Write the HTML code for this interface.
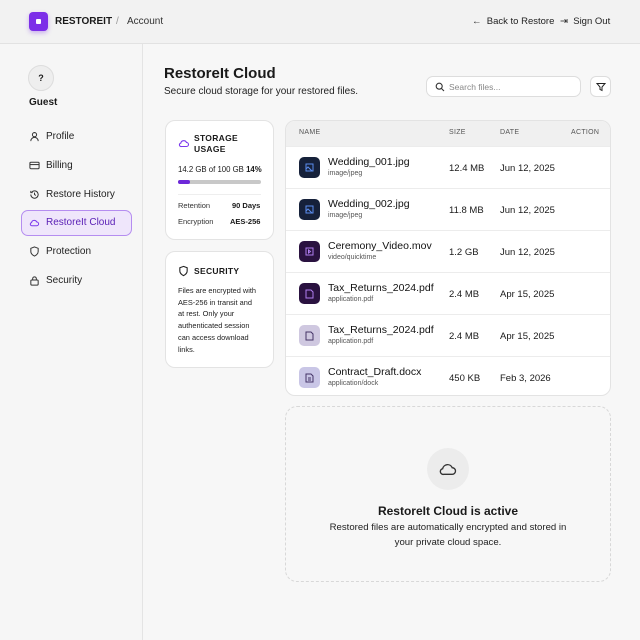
<!DOCTYPE html>
<html><head><meta charset="utf-8"><style>
*{box-sizing:border-box;margin:0;padding:0}
body{width:640px;height:640px;overflow:hidden;background:#f7f7f7;font-family:"Liberation Sans",sans-serif;color:#1a1a1a;position:relative}
.abs{position:absolute}
.top{left:0;top:0;width:640px;height:44px;background:#f2f2f2;border-bottom:1px solid #e2e2e2}
.side{left:0;top:44px;width:143px;height:596px;border-right:1px solid #e4e4e4;background:#f6f6f6}
.nav{position:absolute;left:29px;font-size:10px;color:#222;display:flex;align-items:center;gap:3px}
.nav svg{width:11px;height:11px}
.card{position:absolute;background:#fff;border:1px solid #e3e3e3;border-radius:10px}
.row{position:absolute;left:0;width:326px;height:42px;border-top:1px solid #ececec;font-size:9.5px}
.ic{position:absolute;left:13px;top:10px;width:21px;height:21px;border-radius:5px;display:flex;align-items:center;justify-content:center}
.fn{position:absolute;left:42px;top:9px;font-size:10.5px;color:#111}
.ft{position:absolute;left:42px;top:23px;font-size:7px;color:#555}
.sz{position:absolute;left:163px;top:16px}
.dt{position:absolute;left:214px;top:16px}
</style></head><body>
<div class="abs top"></div>
<div class="abs" style="left:29px;top:12px;width:19px;height:19px;background:#7c2ee8;border-radius:4px;box-shadow:0 2px 5px rgba(124,46,232,.35)"><div style="position:absolute;left:7px;top:7px;width:5px;height:5px;background:#fff;border-radius:1px"></div></div>
<div class="abs" style="left:55px;top:16px;font-size:10px;font-weight:bold">RESTOREIT</div>
<div class="abs" style="left:116px;top:16px;font-size:10px;color:#999">/</div>
<div class="abs" style="left:127px;top:16px;font-size:10px;color:#333">Account</div>
<div class="abs" style="left:472px;top:16px;font-size:9.5px;color:#222">← &nbsp;Back to Restore</div>
<div class="abs" style="left:560px;top:16px;font-size:9.5px;color:#222">⇥ &nbsp;Sign Out</div>

<div class="abs side"></div>
<div class="abs" style="left:28px;top:65px;width:26px;height:26px;border-radius:50%;background:#eee;border:1px solid #ddd;font-size:9px;font-weight:bold;text-align:center;line-height:24px">?</div>
<div class="abs" style="left:29px;top:97px;font-size:10px;font-weight:bold">Guest</div>
<div class="abs" style="left:21px;top:210px;width:111px;height:26px;border:1px solid #b58df0;background:#efe6fb;border-radius:7px"></div>
<div class="nav" style="top:131px"><svg viewBox="0 0 12 12" fill="none" stroke="#333" stroke-width="1.1"><circle cx="6" cy="4" r="2.3"/><path d="M2 11c0-2.5 2-4 4-4s4 1.5 4 4"/></svg><span style="margin-left:3px">Profile</span></div>
<div class="nav" style="top:160px"><svg viewBox="0 0 12 12" fill="none" stroke="#333" stroke-width="1.1"><rect x="1" y="2.5" width="10" height="7" rx="1"/><path d="M1 5h10"/></svg><span style="margin-left:3px">Billing</span></div>
<div class="nav" style="top:189px"><svg viewBox="0 0 12 12" fill="none" stroke="#333" stroke-width="1.1"><path d="M2 6a4 4 0 1 0 1.2-2.8M2 2v2h2M6 4v2l1.5 1"/></svg><span style="margin-left:3px">Restore History</span></div>
<div class="nav" style="top:217px;color:#5b21b6"><svg viewBox="0 0 12 12" fill="none" stroke="#7c3aed" stroke-width="1.1"><path d="M3.5 9.5h5a2 2 0 0 0 0-4 3 3 0 0 0-5.7.6A1.7 1.7 0 0 0 3.5 9.5z"/></svg><span style="margin-left:3px">RestoreIt Cloud</span></div>
<div class="nav" style="top:246px"><svg viewBox="0 0 12 12" fill="none" stroke="#333" stroke-width="1.1"><path d="M6 1l4 1.5v3.5c0 2.5-2 4-4 5-2-1-4-2.5-4-5V2.5z"/></svg><span style="margin-left:3px">Protection</span></div>
<div class="nav" style="top:275px"><svg viewBox="0 0 12 12" fill="none" stroke="#333" stroke-width="1.1"><rect x="2" y="5.5" width="8" height="5.5" rx="1"/><path d="M4 5.5V4a2 2 0 0 1 4 0v1.5"/></svg><span style="margin-left:3px">Security</span></div>

<div class="abs" style="left:164px;top:65px;font-size:15px;font-weight:bold">RestoreIt Cloud</div>
<div class="abs" style="left:164px;top:86px;font-size:10px;color:#222">Secure cloud storage for your restored files.</div>
<div class="abs" style="left:426px;top:76px;width:155px;height:21px;background:#fff;border:1px solid #ddd;border-radius:7px"><svg class="abs" style="left:8px;top:5px" width="10" height="10" viewBox="0 0 10 10" fill="none" stroke="#333" stroke-width="1.1"><circle cx="4.2" cy="4.2" r="3"/><path d="M6.5 6.5L9 9"/></svg><span class="abs" style="left:22px;top:5px;font-size:8.5px;color:#888">Search files...</span></div>
<div class="abs" style="left:590px;top:76px;width:21px;height:21px;background:#fff;border:1px solid #ddd;border-radius:6px"><svg class="abs" style="left:5px;top:5px" width="10" height="10" viewBox="0 0 10 10" fill="none" stroke="#222" stroke-width="1"><path d="M1 1.5h8L6 5v3.5L4 7.5V5z"/></svg></div>

<div class="card" style="left:165px;top:120px;width:109px;height:120px">
<svg class="abs" style="left:12px;top:17px" width="12" height="10" viewBox="0 0 12 10" fill="none" stroke="#7c3aed" stroke-width="1.1"><path d="M3.5 8.5h5a2 2 0 0 0 0-4 3 3 0 0 0-5.7.6A1.7 1.7 0 0 0 3.5 8.5z"/></svg>
<div class="abs" style="left:28px;top:12px;font-size:8.5px;font-weight:bold;line-height:10.5px;letter-spacing:.3px">STORAGE<br>USAGE</div>
<div class="abs" style="left:12px;top:44px;font-size:7.8px">14.2 GB of 100 GB <b>14%</b></div>
<div class="abs" style="left:12px;top:59px;width:83px;height:4px;background:#c8c8c8;border-radius:2px"><div style="width:12px;height:4px;background:#6d28d9;border-radius:2px"></div></div>
<div class="abs" style="left:12px;top:73px;width:83px;border-top:1px solid #eee"></div>
<div class="abs" style="left:12px;top:80px;font-size:7.5px;color:#333">Retention</div>
<div class="abs" style="left:66px;top:80px;font-size:7.5px;font-weight:bold">90 Days</div>
<div class="abs" style="left:12px;top:96px;font-size:7.5px;color:#333">Encryption</div>
<div class="abs" style="left:64px;top:96px;font-size:7.5px;font-weight:bold">AES-256</div>
</div>
<div class="card" style="left:165px;top:251px;width:109px;height:117px">
<svg class="abs" style="left:12px;top:13px" width="11" height="12" viewBox="0 0 12 12" fill="none" stroke="#222" stroke-width="1.2"><path d="M6 1l4 1.5v3.5c0 2.5-2 4-4 5-2-1-4-2.5-4-5V2.5z"/></svg>
<div class="abs" style="left:28px;top:14px;font-size:8.5px;font-weight:bold;letter-spacing:.3px">SECURITY</div>
<div class="abs" style="left:12px;top:33px;width:84px;font-size:7.4px;line-height:11.7px;color:#222">Files are encrypted with<br>AES-256 in transit and<br>at rest. Only your<br>authenticated session<br>can access download<br>links.</div>
</div>

<div class="card" style="left:285px;top:120px;width:326px;height:276px;overflow:hidden">
<div class="abs" style="left:0;top:0;width:326px;height:25px;background:#f0f0f0;font-size:7px;color:#555;letter-spacing:.3px">
<span class="abs" style="left:13px;top:8px">NAME</span><span class="abs" style="left:163px;top:8px">SIZE</span><span class="abs" style="left:214px;top:8px">DATE</span><span class="abs" style="left:285px;top:8px">ACTION</span></div>
<div class="row" style="top:25px"><div class="ic" style="background:#16213a"><svg width="9" height="9" viewBox="0 0 9 9" fill="none" stroke="#5b8def"><rect x="1" y="1" width="7" height="7"/><path d="M1 6l2-2 4 4"/></svg></div><div class="fn">Wedding_001.jpg</div><div class="ft">image/jpeg</div><div class="sz">12.4 MB</div><div class="dt">Jun 12, 2025</div></div>
<div class="row" style="top:67px"><div class="ic" style="background:#16213a"><svg width="9" height="9" viewBox="0 0 9 9" fill="none" stroke="#5b8def"><rect x="1" y="1" width="7" height="7"/><path d="M1 6l2-2 4 4"/></svg></div><div class="fn">Wedding_002.jpg</div><div class="ft">image/jpeg</div><div class="sz">11.8 MB</div><div class="dt">Jun 12, 2025</div></div>
<div class="row" style="top:109px"><div class="ic" style="background:#2a1240"><svg width="9" height="9" viewBox="0 0 9 9" fill="none" stroke="#b07ef0"><rect x="1" y="1" width="7" height="7"/><path d="M3.5 3v3l2-1.5z"/></svg></div><div class="fn">Ceremony_Video.mov</div><div class="ft">video/quicktime</div><div class="sz">1.2 GB</div><div class="dt">Jun 12, 2025</div></div>
<div class="row" style="top:151px"><div class="ic" style="background:#2a1240"><svg width="9" height="10" viewBox="0 0 9 10" fill="none" stroke="#b07ef0"><path d="M1 1h5l2 2v6H1z"/></svg></div><div class="fn">Tax_Returns_2024.pdf</div><div class="ft">application.pdf</div><div class="sz">2.4 MB</div><div class="dt">Apr 15, 2025</div></div>
<div class="row" style="top:193px"><div class="ic" style="background:#cfc8e0"><svg width="9" height="10" viewBox="0 0 9 10" fill="none" stroke="#443366"><path d="M1 1h5l2 2v6H1z"/></svg></div><div class="fn">Tax_Returns_2024.pdf</div><div class="ft">application.pdf</div><div class="sz">2.4 MB</div><div class="dt">Apr 15, 2025</div></div>
<div class="row" style="top:235px"><div class="ic" style="background:#c9c6e6"><svg width="9" height="10" viewBox="0 0 9 10" fill="none" stroke="#443366"><path d="M1 1h5l2 2v6H1zM3 5h3M3 7h3"/></svg></div><div class="fn">Contract_Draft.docx</div><div class="ft">application/dock</div><div class="sz">450 KB</div><div class="dt">Feb 3, 2026</div></div>
</div>

<div class="abs" style="left:285px;top:406px;width:326px;height:176px;border:1px dashed #d8d8d8;border-radius:12px;background:#f7f7f7"></div>
<div class="abs" style="left:427px;top:448px;width:42px;height:42px;border-radius:50%;background:#ececec"><svg class="abs" style="left:11px;top:12px" width="20" height="17" viewBox="0 0 12 10" fill="none" stroke="#333" stroke-width=".8"><path d="M3.5 8.5h5a2 2 0 0 0 0-4 3 3 0 0 0-5.7.6A1.7 1.7 0 0 0 3.5 8.5z"/></svg></div>
<div class="abs" style="left:285px;top:504px;width:326px;text-align:center;font-size:12px;font-weight:bold">RestoreIt Cloud is active</div>
<div class="abs" style="left:285px;top:521px;width:326px;text-align:center;font-size:9.6px;line-height:14.5px;color:#222">Restored files are automatically encrypted and stored in<br>your private cloud space.</div>
</body></html>
